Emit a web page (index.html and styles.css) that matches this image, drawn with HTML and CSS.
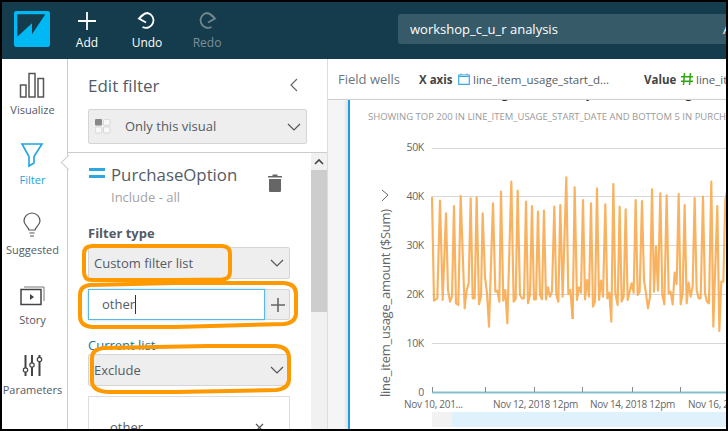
FILE: index.html
```html
<!DOCTYPE html>
<html lang="en">
<head>
    <meta charset="UTF-8">
    <title>workshop_c_u_r analysis</title>
    <link rel="stylesheet" href="styles.css">
</head>
<body>
<div class="frame">
    <div class="topbar">
        <svg class="logo" width="36" height="36" viewBox="0 0 36 36">
            <rect width="36" height="36" rx="2" fill="#00b8f4"/>
            <polygon points="3.3,3.3 31.3,3.3 18,23.3 18,12.3 3.3,25.7" fill="#143c4d"/>
        </svg>
        <div class="tool tool-add">
            <svg width="24" height="24" viewBox="0 0 24 24"><path d="M12 3V21M3 12H21" stroke="#fff" stroke-width="1.800" fill="none"/></svg>
            <span>Add</span>
        </div>
        <div class="tool tool-undo">
            <svg width="24" height="24" viewBox="0 0 24 24"><path d="M10.500 4L4 9.500L11 13.500M4 9.500Q8 4.500 12.500 4A7.500 7.500 0 1 1 7.500 18" stroke="#fff" stroke-width="1.800" fill="none"/></svg>
            <span>Undo</span>
        </div>
        <div class="tool tool-redo">
            <svg width="24" height="24" viewBox="0 0 24 24"><path d="M13.500 4L20 9.500L13 13.500M20 9.500Q16 4.500 11.500 4A7.500 7.500 0 1 0 16.500 18" stroke="#71868f" stroke-width="1.800" fill="none"/></svg>
            <span>Redo</span>
        </div>
        <div class="title-field">
            <span class="title-name">workshop_c_u_r analysis</span>
            <span>Autosave</span>
        </div>
    </div>

    <div class="main">
        <div class="rail">
            <div class="rail-item">
                <svg width="65" height="30" viewBox="0 0 65 30"><path d="M18.500 13H24V25H18.500ZM27 1.500H33V25H27ZM36 6.500H41.500V25H36Z" fill="none" stroke="#555" stroke-width="1.500"/></svg>
                <span>Visualize</span>
            </div>
            <div class="rail-item active">
                <svg width="65" height="30" viewBox="0 0 65 30"><path d="M20 2H40L32 14.500V21L27 24V14.500Z" fill="none" stroke="#1fa4e0" stroke-width="1.600"/></svg>
                <span>Filter</span>
            </div>
            <div class="rail-item">
                <svg width="65" height="30" viewBox="0 0 65 30"><path d="M27 18C26 14 22 13 22 9A8 8 0 0 1 38 9C38 13 34 14 33 18ZM27.500 21H32.500M28 24H32" fill="none" stroke="#555" stroke-width="1.200"/></svg>
                <span>Suggested</span>
            </div>
            <div class="rail-item">
                <svg width="65" height="30" viewBox="0 0 65 30"><path d="M19 7.500H39V22.500H19Z" fill="none" stroke="#444" stroke-width="1.500"/><path d="M22 5H42V19" fill="none" stroke="#777" stroke-width="1"/><polygon points="28,12 32,15 28,18" fill="#444"/></svg>
                <span>Story</span>
            </div>
            <div class="rail-item">
                <svg width="65" height="30" viewBox="0 0 65 30"><path d="M23.500 3V24M30 3V24M37.500 3V24" stroke="#444" stroke-width="2" fill="none"/><circle cx="23.500" cy="18" r="2.200" fill="#fff" stroke="#444" stroke-width="1.200"/><circle cx="30" cy="13" r="2.200" fill="#fff" stroke="#444" stroke-width="1.200"/><circle cx="37.500" cy="7.500" r="2.200" fill="#fff" stroke="#444" stroke-width="1.200"/></svg>
                <span>Parameters</span>
            </div>
        </div>

        <div class="panel">
            <div class="panel-head">
                <div class="panel-title">
                    <span>Edit filter</span>
                    <svg width="10" height="16" viewBox="0 0 10 16"><path d="M8 2L2 8L8 14" fill="none" stroke="#666" stroke-width="1.200"/></svg>
                </div>
                <div class="select select-scope">
                    <svg width="16" height="15" viewBox="0 0 16 15">
                        <rect width="7" height="6.500" rx="1" fill="#888"/>
                        <rect x="8.500" y=".3" width="6.500" height="6" rx="1" fill="#f8f8f8" stroke="#ccc" stroke-width=".7"/>
                        <rect x=".3" y="8" width="6.500" height="6" rx="1" fill="#f8f8f8" stroke="#ccc" stroke-width=".7"/>
                        <rect x="8.500" y="8" width="6.500" height="6" rx="1" fill="#f8f8f8" stroke="#ccc" stroke-width=".7"/>
                    </svg>
                    <span class="select-text">Only this visual</span>
                    <svg class="chev" width="14" height="8" viewBox="0 0 14 8"><path d="M1 1L7 7L13 1" fill="none" stroke="#555" stroke-width="1.200"/></svg>
                </div>
            </div>
            <div class="panel-body">
                <div class="notch"></div>
                <div class="filter-form">
                    <div class="filter-head">
                        <div class="bars"></div>
                        <div class="filter-name">
                            <div class="name">PurchaseOption</div>
                            <div class="sub">Include - all</div>
                        </div>
                        <svg class="trash" width="14" height="18" viewBox="0 0 14 18"><path d="M0 2H4.500V.5H9.500V2H14V3.500H0ZM1 5H13V17Q13 18 12 18H2Q1 18 1 17Z" fill="#666"/></svg>
                    </div>
                    <div class="label label-bold">Filter type</div>
                    <div class="select">
                        <span class="select-text">Custom filter list</span>
                        <svg class="chev" width="14" height="8" viewBox="0 0 14 8"><path d="M1 1L7 7L13 1" fill="none" stroke="#555" stroke-width="1.200"/></svg>
                    </div>
                    <div class="add-row">
                        <div class="add-input">other<i class="caret"></i></div>
                        <svg class="add-plus" width="14" height="14" viewBox="0 0 14 14"><path d="M7 0V14M0 7H14" stroke="#666" stroke-width="1.600"/></svg>
                    </div>
                    <div class="label label-current">Current list</div>
                    <div class="select">
                        <span class="select-text">Exclude</span>
                        <svg class="chev" width="14" height="8" viewBox="0 0 14 8"><path d="M1 1L7 7L13 1" fill="none" stroke="#555" stroke-width="1.200"/></svg>
                    </div>
                    <div class="list-box">
                        <span>other</span>
                        <svg width="9" height="9" viewBox="0 0 9 9"><path d="M1 1L8 8M8 1L1 8" stroke="#555" stroke-width="1.200"/></svg>
                    </div>
                </div>
                <div class="scrollbar">
                    <svg width="16" height="17" viewBox="0 0 16 17"><path d="M4 11L8 7L12 11" fill="none" stroke="#444" stroke-width="1.600"/></svg>
                    <div class="thumb"></div>
                </div>
            </div>
        </div>

        <div class="content">
            <div class="wells">
                <span class="wells-title">Field wells</span>
                <b class="well-x">X axis</b>
                <svg class="cal" width="12" height="12" viewBox="0 0 12 12"><path d="M.7 2H11.300V11.300H.7ZM.7 3.500H11.300M3 .5V2M9 .5V2" fill="none" stroke="#3ba8e0" stroke-width="1.200"/></svg>
                <span class="well-field">line_item_usage_start_d...</span>
                <b class="well-value">Value</b>
                <svg class="hash" width="12" height="12" viewBox="0 0 12 12"><path d="M3.500 0L2.500 12M9.500 0L8.500 12M0 3.800H12M0 8.200H12" stroke="#2fa80e" stroke-width="1.500" fill="none"/></svg>
                <span>line_item_usage_amount</span>
            </div>
            <div class="sheet">
                <div class="gutter"></div>
                <div class="card">
                    <svg class="chart" width="376" height="329" viewBox="350 100 376 329">
                        <text class="chart-title" x="413" y="96.500">line_item_usage_amount by line_item_usage_start_date and PurchaseOption</text>
                        <text class="chart-sub" x="368" y="120">SHOWING TOP 200 IN LINE_ITEM_USAGE_START_DATE AND BOTTOM 5 IN PURCHASEOPTION</text>

                        <g class="grid">
                            <path d="M432 148.500H726M432 196.500H726M432 245.500H726M432 294.500H726M432 343.500H726"/>
                        </g>
                        <g class="y-labels">
                            <text x="424" y="151">50K</text>
                            <text x="424" y="200">40K</text>
                            <text x="424" y="249">30K</text>
                            <text x="424" y="298">20K</text>
                            <text x="424" y="347">10K</text>
                            <text x="424" y="396">0</text>
                        </g>
                        <text class="y-title" transform="translate(390 397) rotate(-90)">line_item_usage_amount ($Sum)</text>
                        <path d="M382 190L388 195L382 201" fill="none" stroke="#666" stroke-width="1"/>

                        <g class="line" transform="translate(420 170) scale(.3333)">
                            <polyline points="36,80 42,392 52,385 60,92 68,390 78,130 84,360 90,395 96,380 102,108 108,400 115,405 122,78 134,415 140,360 146,340 152,85 158,385 164,385 170,82 177,403 183,380 188,130 195,320 201,370 207,470 219,100 226,365 232,362 238,395 243,65 250,392 256,360 262,460 274,35 281,395 287,388 293,62 300,375 306,385 312,385 318,95 324,400 330,375 336,108 342,388 348,388 354,125 360,375 366,388 372,122 378,388 384,352 390,380 396,365 403,110 409,375 415,395 421,105 428,380 439,22 445,372 451,360 458,447"/>
                        </g>
                        <g class="line" transform="translate(573 170) scale(.3333)">
                            <polyline points="-1,447 5,52 12,390 18,352 24,368 30,90 36,388 42,330 48,380 54,100 60,410 66,395 72,55 78,390 84,332 90,380 97,103 103,385 109,368 115,455 121,42 127,370 134,405 140,110 146,395 152,380 158,118 164,390 170,365 176,340 182,368 188,90 194,375 200,365 207,93 213,330 219,370 225,415 231,380 237,58 243,365 249,230 255,362 262,70 268,375 274,403 281,76 287,370 293,365 299,403 305,308 311,342 317,72 323,403 329,370 335,105 341,400 347,338 353,380 359,350 365,84 371,360 377,385 383,385 390,80 396,370 402,395 408,400 415,35 421,470 433,108 439,483 445,335 451,335 457,90 463,60"/>
                        </g>

                        <path class="axis" d="M432 392.500H726"/>
                        <path class="ticks" d="M432.500 387V392M485.500 387V392M534.500 387V392M582.500 387V392M632.500 387V392M680.500 387V392"/>
                        <g class="x-labels">
                            <text x="404" y="408">Nov 10, 201...</text>
                            <text x="493" y="408">Nov 12, 2018 12pm</text>
                            <text x="590" y="408">Nov 14, 2018 12pm</text>
                            <text x="688" y="408">Nov 16, 2018 12pm</text>
                        </g>
                        <rect x="432" y="412" width="294" height="15" fill="#dff1fb"/>
                        <rect x="432" y="412" width="20" height="15" fill="#f2f2f2"/>
                    </svg>
                </div>
            </div>
        </div>
    </div>

    <svg class="marks" width="728" height="431" viewBox="0 0 728 431">
        <path d="M92 246H222Q230 246 230 254V272Q230 279 222 279.500L175 280H92Q84 280 84 272V254Q84 246 92 246Z"/>
        <path d="M90 285L175 283H284Q296 284 296 294V314Q295 323 284 324L175 327H92Q80 326 80 316V295Q80 286 90 285Z"/>
        <path d="M104 348L208 346H276Q289 347 289 358V380Q288 389 276 390L175 392H108Q92 391 92 381V358Q92 349 104 348Z"/>
    </svg>
</div>
</body>
</html>
```

FILE: styles.css
```css
* {
    margin: 0;
    padding: 0;
    box-sizing: border-box;
}
html, body {
    height: 100%;
    overflow: hidden;
    background: #000;
}
body {
    padding: 2px;
    font-family: "Open Sans", "Noto Sans", sans-serif;
    color: #545b64;
}
.frame {
    width: 724px;
    height: 427px;
    background: #fff;
    overflow: hidden;
}

/* top bar */
.topbar {
    height: 57px;
    background: #143c4d;
    display: flex;
    align-items: flex-start;
    color: #fff;
}
.logo {
    margin: 9px 0 0 12px;
    flex: none;
}
.tool {
    width: 60px;
    flex: none;
    display: flex;
    flex-direction: column;
    align-items: center;
    padding-top: 7px;
    font-size: 12px;
    line-height: 16px;
}
.tool svg {
    margin-bottom: 2px;
}
.tool-add {
    margin-left: 7px;
}
.tool-redo {
    color: #7d8f98;
}
.title-field {
    flex: none;
    width: 420px;
    height: 30px;
    margin: 12px 0 0 161px;
    padding-left: 12px;
    background: #375a69;
    border-radius: 3px;
    display: flex;
    align-items: center;
    font-size: 13px;
    white-space: nowrap;
}
.title-name {
    flex: 0 0 313px;
}

/* main row */
.main {
    display: flex;
    height: 370px;
}
.rail {
    flex: 0 0 66px;
    padding-top: 13px;
    border-right: 1px solid #ccc;
}
.rail-item {
    width: 61px;
    height: 70px;
    text-align: center;
    font-size: 11px;
    line-height: 16px;
    white-space: nowrap;
}
.rail-item svg {
    display: block;
}
.rail-item.active {
    color: #1fa4e0;
}

/* filter panel */
.panel {
    flex: 0 0 260px;
    border-right: 1px solid #ddd;
    display: flex;
    flex-direction: column;
}
.panel-head {
    height: 94px;
    padding: 14px 20px 0 20px;
    border-bottom: 1px solid #ccc;
}
.panel-title {
    height: 24px;
    display: flex;
    justify-content: space-between;
    align-items: center;
    font-size: 17px;
    padding-right: 8px;
}
.select {
    height: 32px;
    display: flex;
    align-items: center;
    padding: 0 5px 0 5px;
    background: #eee;
    border: 1px solid #d5d5d5;
    border-radius: 2px;
    font-size: 13px;
}
.select-text {
    flex: 1;
}
.select-scope {
    height: 35px;
    margin-top: 12px;
    padding-left: 6px;
}
.select-scope .select-text {
    margin: -2px 0 0 14px;
}
.panel-body {
    flex: 1;
    display: flex;
    position: relative;
    min-height: 0;
}
.notch {
    position: absolute;
    left: -5px;
    top: 4px;
    width: 11px;
    height: 11px;
    background: #fff;
    border-left: 1px solid #ccc;
    border-bottom: 1px solid #ccc;
    transform: rotate(45deg);
}
.filter-form {
    flex: 1;
    padding: 10px 21px 0 20px;
    min-width: 0;
}
.filter-head {
    display: flex;
    height: 44px;
}
.bars {
    width: 16px;
    height: 10px;
    margin: 5px 6px 0 1px;
    border-top: 3px solid #2ea7e0;
    border-bottom: 3px solid #2ea7e0;
}
.filter-name {
    flex: 1;
}
.name {
    font-size: 16.800px;
    line-height: 24px;
}
.sub {
    font-size: 13px;
    line-height: 20px;
    color: #a3a3a3;
}
.trash {
    margin: 11px 8px 0 0;
}
.label {
    font-size: 13px;
    line-height: 18px;
}
.label-bold {
    font-weight: 700;
    margin-top: 17px;
    margin-bottom: 5px;
}
.label-current {
    margin-top: 16px;
    color: #1b6f9c;
}
.add-row {
    height: 31px;
    margin: 10px 0 0;
    display: flex;
    align-items: center;
    background: #eee;
    border: 1px solid #d5d5d5;
    border-radius: 2px;
}
.add-input {
    flex: 0 0 177px;
    margin-left: -1px;
    height: 31px;
    padding-left: 13px;
    background: #fff;
    border: 1px solid #5db8e6;
    box-shadow: 0 0 3px #a9dcf3;
    font-size: 13px;
    line-height: 28px;
}
.caret {
    display: inline-block;
    width: 1px;
    height: 19px;
    background: #333;
    vertical-align: -5px;
}
.add-plus {
    margin-left: 6px;
}
.list-box {
    height: 50px;
    margin-top: 10px;
    padding: 21px 25px 0 21px;
    display: flex;
    justify-content: space-between;
    border: 1px solid #ddd;
    font-size: 13px;
    line-height: 18px;
}
.list-box svg {
    margin-top: 5px;
}
.scrollbar {
    flex: 0 0 16px;
    background: #f1f1f1;
}
.scrollbar svg {
    display: block;
}
.thumb {
    height: 142px;
    background: #cdcdcd;
}

/* right side */
.content {
    flex: 1;
    min-width: 0;
    overflow: hidden;
    display: flex;
    flex-direction: column;
}
.wells {
    height: 41px;
    flex: none;
    display: flex;
    align-items: center;
    padding-left: 10px;
    white-space: nowrap;
    font-size: 11.500px;
    border-bottom: 1px solid #ccc;
}
.wells-title {
    font-size: 13px;
    color: #6b7680;
    width: 81px;
    flex: none;
}
.well-x {
    color: #444;
    width: 39px;
    flex: none;
}
.cal {
    flex: none;
    margin-right: 3px;
}
.well-field {
    width: 171px;
    flex: none;
}
.well-value {
    color: #444;
    width: 37px;
    flex: none;
}
.hash {
    flex: none;
    margin-right: 3px;
}
.sheet {
    flex: 1;
    display: flex;
    min-height: 0;
}
.gutter {
    flex: 0 0 20px;
    background: #f5f5f5;
}
.card {
    flex: 1;
    border-left: 2px solid #1fa0dc;
    min-width: 0;
    box-shadow: -2px 0 3px #ddd;
}
.chart {
    display: block;
}
.chart text {
    font-family: "Open Sans", "Noto Sans", sans-serif;
}
.chart-title {
    font-size: 14px;
    fill: #333;
}
.chart-sub {
    font-size: 9.500px;
    fill: #9a9a9a;
}
.grid path {
    stroke: #d8d8d8;
    stroke-width: 1;
    fill: none;
}
.y-labels text {
    font-size: 10.500px;
    letter-spacing: -.3px;
    fill: #666;
    text-anchor: end;
}
.x-labels text {
    font-size: 10px;
    letter-spacing: -.3px;
    fill: #666;
}
.y-title {
    font-size: 13px;
    letter-spacing: -.25px;
    fill: #666;
}
.line polyline {
    fill: none;
    stroke: #f9ab52;
    stroke-width: 6.500;
    stroke-linejoin: round;
    opacity: .92;
}
.axis {
    stroke: #84bfca;
    stroke-width: 2;
}
.ticks {
    stroke: #888;
    stroke-width: 1;
}

/* hand drawn orange marks over the form */
.marks {
    position: absolute;
    left: 0;
    top: 0;
    pointer-events: none;
}
.marks path {
    fill: none;
    stroke: #ff9900;
    stroke-width: 4;
}
```
